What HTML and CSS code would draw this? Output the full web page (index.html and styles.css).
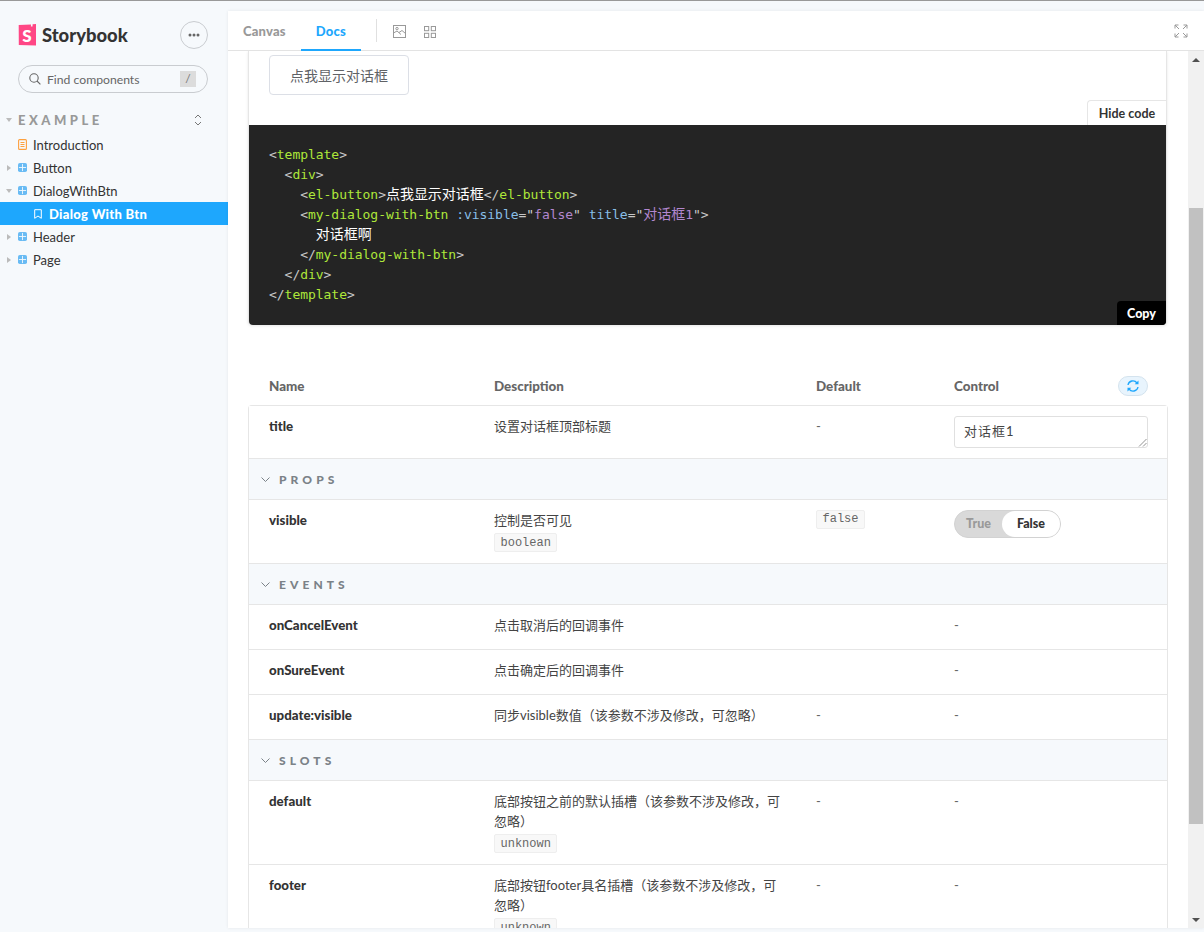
FILE: index.html
```html
<!DOCTYPE html>
<html lang="zh">
<head>
<meta charset="utf-8">
<title>Storybook</title>
<link rel="stylesheet" href="styles.css">
</head>
<body>
<div class="app">
  <aside class="sidebar">
    <div class="brand">
      <svg class="logo" viewBox="0 0 18 22"><path fill="#ff4785" d="M0.7 1 13 .4l-.1 2.200 1.600-.1.1-2.300L18 0v21.600L.8 21z"/><text x="9" y="17.500" text-anchor="middle" class="logo-s">S</text></svg>
      <span class="brand-name">Storybook</span>
      <button class="menu-btn"><svg width="12" height="4" viewBox="0 0 12 4"><circle cx="2" cy="2" r="1.500"/><circle cx="6" cy="2" r="1.500"/><circle cx="10" cy="2" r="1.500"/></svg></button>
    </div>
    <div class="search">
      <svg class="search-ico" width="12" height="12" viewBox="0 0 12 12"><circle cx="5" cy="5" r="4.200"/><path d="M8 8l3.400 3.400"/></svg>
      <span class="search-text">Find components</span>
      <kbd class="search-key">/</kbd>
    </div>
    <div class="tree-head">
      <svg class="caret" width="6" height="4" viewBox="0 0 6 4"><path d="M0 0h6L3 4z"/></svg>
      <span class="tree-title">EXAMPLE</span>
      <svg class="updown" width="8" height="12" viewBox="0 0 8 12"><path d="M1 4l3-3 3 3M1 8l3 3 3-3"/></svg>
    </div>
    <ul class="tree">
      <li class="node"><span class="caret-gap"></span><svg class="ico" width="9" height="11" viewBox="0 0 9 11"><rect x=".6" y=".6" width="7.800" height="9.800" rx="1" class="doc"/><path class="doc" d="M2.500 3.500h4M2.500 5.500h4M2.500 7.500h4"/></svg>Introduction</li>
      <li class="node"><svg class="caret side" width="4" height="6" viewBox="0 0 4 6"><path d="M0 0v6l4-3z"/></svg><svg class="ico" width="9" height="9" viewBox="0 0 10 10"><rect width="10" height="10" rx="2" class="comp"/><path d="M5 1v8M1 5h8" class="comp-line"/></svg>Button</li>
      <li class="node"><svg class="caret" width="6" height="4" viewBox="0 0 6 4"><path d="M0 0h6L3 4z"/></svg><svg class="ico" width="9" height="9" viewBox="0 0 10 10"><rect width="10" height="10" rx="2" class="comp"/><path d="M5 1v8M1 5h8" class="comp-line"/></svg>DialogWithBtn</li>
      <li class="node selected"><svg class="mark" width="8" height="10" viewBox="0 0 8 10"><path d="M.7.7h6.600v8.600L4 7 .7 9.300z"/></svg>Dialog With Btn</li>
      <li class="node"><svg class="caret side" width="4" height="6" viewBox="0 0 4 6"><path d="M0 0v6l4-3z"/></svg><svg class="ico" width="9" height="9" viewBox="0 0 10 10"><rect width="10" height="10" rx="2" class="comp"/><path d="M5 1v8M1 5h8" class="comp-line"/></svg>Header</li>
      <li class="node"><svg class="caret side" width="4" height="6" viewBox="0 0 4 6"><path d="M0 0v6l4-3z"/></svg><svg class="ico" width="9" height="9" viewBox="0 0 10 10"><rect width="10" height="10" rx="2" class="comp"/><path d="M5 1v8M1 5h8" class="comp-line"/></svg>Page</li>
    </ul>
  </aside>
  <main class="panel">
    <header class="toolbar">
      <a class="tab">Canvas</a>
      <a class="tab active">Docs</a>
      <span class="divider"></span>
      <svg class="tool" width="13" height="13" viewBox="0 0 13 13"><rect x=".5" y=".5" width="12" height="12"/><circle cx="4" cy="3.600" r="1.200"/><path d="M.5 8l3.500-2 4 3.500M6 7.500L9 5.500l3.500 3"/></svg>
      <svg class="tool" width="12" height="12" viewBox="0 0 12 12"><rect x=".5" y=".5" width="4.200" height="4.200"/><rect x="7.300" y=".5" width="4.200" height="4.200"/><rect x=".5" y="7.300" width="4.200" height="4.200"/><rect x="7.300" y="7.300" width="4.200" height="4.200"/></svg>
      <svg class="tool expand" width="14" height="14" viewBox="0 0 14 14"><path d="M1 1l4 4M13 1L9 5M1 13l4-4M13 13L9 9M1 4.500V1h3.500M13 4.500V1H9.500M1 9.500V13h3.500M13 9.500V13H9.500"/></svg>
    </header>
    <div class="body">
      <div class="content">
        <section class="story">
          <div class="preview"><button class="demo-btn">点我显示对话框</button></div>
          <div class="hide-row"><span class="hide-code">Hide code</span></div>
          <div class="code">
<pre class="code-pre"><span class="p">&lt;</span><span class="g">template</span><span class="p">&gt;</span>
  <span class="p">&lt;</span><span class="g">div</span><span class="p">&gt;</span>
    <span class="p">&lt;</span><span class="g">el-button</span><span class="p">&gt;</span><span class="w zh">点我显示对话框</span><span class="p">&lt;/</span><span class="g">el-button</span><span class="p">&gt;</span>
    <span class="p">&lt;</span><span class="g">my-dialog-with-btn</span> <span class="b">:visible</span><span class="p">=</span><span class="q">"</span><span class="v">false</span><span class="q">"</span> <span class="b">title</span><span class="p">=</span><span class="q">"</span><span class="v"><span class="zh">对话框</span>1</span><span class="q">"</span><span class="p">&gt;</span>
      <span class="w zh">对话框啊</span>
    <span class="p">&lt;/</span><span class="g">my-dialog-with-btn</span><span class="p">&gt;</span>
  <span class="p">&lt;/</span><span class="g">div</span><span class="p">&gt;</span>
<span class="p">&lt;/</span><span class="g">template</span><span class="p">&gt;</span></pre>
            <span class="copy">Copy</span>
          </div>
        </section>

        <div class="args-head row-grid">
          <span>Name</span><span>Description</span><span>Default</span>
          <span class="control-head">Control<span class="reset"><svg width="14" height="14" viewBox="0 0 14 14"><path d="M2 6a5 5 0 0 1 9-2M12 8a5 5 0 0 1-9 2"/><path class="arrow" d="M12.500 1.500v3.800H8.700zM1.500 12.500V8.700h3.800z"/></svg></span></span>
        </div>
        <div class="args">
          <div class="row row-grid row-title">
            <span class="name">title</span>
            <span class="desc">设置对话框顶部标题</span>
            <span class="dash">-</span>
            <div class="input">对话框1<svg class="grip" width="9" height="9" viewBox="0 0 9 9"><path d="M8.500 1L1 8.500M8.500 5L5 8.500"/></svg></div>
          </div>
          <div class="group"><svg class="chev" width="9" height="5" viewBox="0 0 9 5"><path d="M.5.500l4 4 4-4"/></svg>PROPS</div>
          <div class="row row-grid">
            <span class="name">visible</span>
            <div class="desc">控制是否可见<div class="chip-line"><code class="chip">boolean</code></div></div>
            <div class="default"><code class="chip chip-top">false</code></div>
            <div class="toggle"><span class="opt">True</span><span class="opt on">False</span></div>
          </div>
          <div class="group"><svg class="chev" width="9" height="5" viewBox="0 0 9 5"><path d="M.5.500l4 4 4-4"/></svg>EVENTS</div>
          <div class="row row-grid">
            <span class="name">onCancelEvent</span><span class="desc">点击取消后的回调事件</span><span></span><span class="dash">-</span>
          </div>
          <div class="row row-grid">
            <span class="name">onSureEvent</span><span class="desc">点击确定后的回调事件</span><span></span><span class="dash">-</span>
          </div>
          <div class="row row-grid">
            <span class="name">update:visible</span><span class="desc">同步visible数值（该参数不涉及修改，可忽略）</span><span class="dash">-</span><span class="dash">-</span>
          </div>
          <div class="group"><svg class="chev" width="9" height="5" viewBox="0 0 9 5"><path d="M.5.500l4 4 4-4"/></svg>SLOTS</div>
          <div class="row row-grid">
            <span class="name">default</span>
            <div class="desc">底部按钮之前的默认插槽（该参数不涉及修改，可忽略）<div class="chip-line"><code class="chip">unknown</code></div></div>
            <span class="dash">-</span><span class="dash">-</span>
          </div>
          <div class="row row-grid">
            <span class="name">footer</span>
            <div class="desc">底部按钮footer具名插槽（该参数不涉及修改，可忽略）<div class="chip-line"><code class="chip">unknown</code></div></div>
            <span class="dash">-</span><span class="dash">-</span>
          </div>
        </div>
      </div>
      <div class="scrollbar">
        <span class="arrow-up"></span>
        <div class="track"><div class="thumb"></div></div>
        <span class="arrow-down"></span>
      </div>
    </div>
  </main>
</div>
</body>
</html>
```
FILE: styles.css
```css
* { box-sizing: border-box; }
html, body { margin: 0; height: 932px; overflow: hidden; }
body {
  font-family: Lato, "Noto Sans CJK SC", sans-serif;
  font-size: 13px;
  color: #333;
  background: #f6f9fc;
}
.app {
  display: flex;
  height: 932px;
  border-top: 1px solid #999;
}
.sidebar { width: 228px; flex: none; padding-top: 20px; }
.brand { display: flex; align-items: center; padding: 0 20px 0 18px; height: 28px; }
.logo { width: 18px; height: 22px; flex: none; }
.logo-s { font: 900 17px Lato, sans-serif; fill: #fff; }
.brand-name { font-size: 18.400px; font-weight: 900; color: #333; margin: -1px 0 0 6px; flex: 1; }
.menu-btn {
  width: 28px; height: 28px; border-radius: 50%;
  border: 1px solid #c9ccd0; background: #f6f9fc;
  display: flex; align-items: center; justify-content: center; padding: 0;
}
.menu-btn svg { fill: #666; }
.search {
  margin: 16px 20px 0 18px; height: 28px;
  border: 1px solid #c9ccd0; border-radius: 14px;
  display: flex; align-items: center; padding: 0 11px 0 10px;
}
.search-ico { fill: none; stroke: #666; stroke-width: 1.100; }
.search-text { margin-left: 6px; flex: 1; font-size: 12.200px; color: #666; }
.search-key {
  width: 16px; height: 16px; background: #dcdcdc; color: #777;
  font: 12px/16px Lato, sans-serif; text-align: center;
}
.tree-head { display: flex; align-items: center; height: 14px; margin-top: 20px; padding: 0 26px 0 6px; }
.caret { fill: #bbb; flex: none; }
.tree-title { flex: 1; margin-left: 6px; font-size: 13px; font-weight: 900; letter-spacing: .27em; color: #999; }
.updown { fill: none; stroke: #777; stroke-width: 1; }
.tree { list-style: none; margin: 6px 0 0; padding: 0; }
.node { height: 23px; display: flex; align-items: center; padding-left: 6px; font-size: 13px; color: #333; }
.caret-gap { width: 6px; flex: none; }
.caret.side { margin: 0 1px; }
.ico { margin: 0 6px 0 6px; flex: none; }
.doc { fill: none; stroke: #ff8300; stroke-width: 1.100; opacity: .75; }
.comp { fill: #69bbf4; }
.comp-line { stroke: #f2f9fe; stroke-width: 1; }
.selected { background: #1ea7fd; color: #fff; font-weight: 900; padding-left: 34px; letter-spacing: .3px; }
.mark { fill: none; stroke: #fff; stroke-width: 1; margin-right: 7px; flex: none; }

.panel {
  flex: 1; min-width: 0; margin: 10px 0 4px;
  background: #fff; display: flex; flex-direction: column;
  box-shadow: 0 0 3px rgba(0,0,0,.08);
}
.toolbar {
  height: 40px; flex: none; border-bottom: 1px solid #e3e3e3;
  display: flex; align-items: stretch; padding: 0 16px 0 0;
}
.tab {
  padding: 1px 15px 0; font-size: 13px; font-weight: 900; color: #999; letter-spacing: .2px;
  display: flex; align-items: center; border-bottom: 2px solid transparent; margin-bottom: -1px;
}
.tab.active { color: #1ea7fd; border-bottom-color: #1ea7fd; }
.divider { width: 1px; height: 23px; background: #e0e0e0; align-self: center; margin: 0 16px 0 15px; }
.tool { fill: none; stroke: #999; stroke-width: 1; align-self: center; margin: 2px 18px 0 0; }
.expand { margin: 0 0 0 auto; }

.body { flex: 1; min-height: 0; display: flex; }
.content { flex: 1; min-width: 0; padding: 0 20px; overflow: hidden; }
.story {
  border-left: 1px solid #e6e6e6; border-right: 1px solid #e6e6e6;
  border-radius: 0 0 4px 4px;
  box-shadow: 0 1px 3px rgba(0,0,0,.1);
  margin: 0 1px 0 0;
}
.preview { padding: 4px 20px 0; height: 49px; }
.demo-btn {
  width: 140px; height: 40px; border: 1px solid #dcdfe6; border-radius: 4px;
  background: #fff; color: #606266; font: 14px "Noto Sans CJK SC", sans-serif;
}
.hide-row { display: flex; justify-content: flex-end; height: 25px; }
.hide-code {
  width: 79px; border: 1px solid #e6e6e6; border-width: 1px 0 0 1px;
  border-radius: 4px 0 0 0; text-align: center; font-size: 12.500px; font-weight: 700;
  line-height: 26px; color: #333;
}
.code {
  position: relative; background: #242424; height: 200px;
  padding: 20px; border-radius: 0 0 4px 4px; overflow: hidden;
}
.code-pre {
  margin: 0; font: 13px/20px "DejaVu Sans Mono", "Noto Sans CJK SC", monospace;
  color: #fff; letter-spacing: -.03px;
}
.zh { font-size: 14px; line-height: 1; }
.p { color: #c8c8c8; }
.g { color: #aee83a; }
.w { color: #fff; }
.b { color: #88bfe8; }
.q { color: #cfcfcf; }
.v { color: #b287cf; }
.copy {
  position: absolute; right: 0; bottom: 0; width: 49px; height: 24px;
  background: #000; color: #fff; font-size: 12.500px; font-weight: 900;
  text-align: center; line-height: 26px; border-radius: 4px 0 0 0;
}
.row-grid { display: grid; grid-template-columns: 225px 322px 138px 194px; }
.args-head {
  margin-top: 41px; height: 39px; padding: 10px 20px 0 21px;
  font-size: 13.400px; font-weight: 900; color: #666; line-height: 20px;
}
.control-head { display: flex; justify-content: space-between; align-items: center; height: 20px; }
.reset {
  width: 30px; height: 20px; border-radius: 10px; background: #e8f4fd;
  border: 1px solid #d4e3ee; display: flex; align-items: center; justify-content: center;
}
.reset svg { fill: none; stroke: #1ea7fd; stroke-width: 1.300; }
.reset .arrow { fill: #1ea7fd; stroke: none; }
.args {
  border: 1px solid #e6e6e6; border-bottom: 0; border-radius: 4px 4px 0 0;
}
.row {
  padding: 10px 20px 11px; min-height: 45px; border-bottom: 1px solid #e6e6e6;
  line-height: 20px; background: #fff;
}
.row-title { height: 53px; padding-bottom: 0; }
.name { font-size: 13.300px; font-weight: 900; color: #333; }
.desc { padding-right: 30px; font-size: 13px; color: #444; }
.dash { color: #666; }
.chip-line { height: 22px; padding-top: 3px; }
.chip {
  display: block; width: fit-content; height: 19px; padding: 0 5.500px;
  border: 1px solid #eee; border-radius: 2px; background: #f8f8f8;
  font: 12px/18px "Liberation Mono", monospace; color: #666;
}
.chip-top { line-height: 16px; }
.default { height: 20px; }
.input {
  position: relative; height: 32px; border: 1px solid #e0e0e0; border-radius: 3px;
  padding: 4px 9px; font-size: 13px; letter-spacing: 1px; line-height: 20px; color: #444;
}
.grip { position: absolute; right: 0; bottom: 0; fill: none; stroke: #777; stroke-width: .8; }
.group {
  height: 41px; border-bottom: 1px solid #e6e6e6; background: #f6f9fc;
  display: flex; align-items: center; padding-left: 12px;
  font-size: 12px; font-weight: 900; letter-spacing: .34em; color: #7b8288;
}
.chev { fill: none; stroke: #7b8288; stroke-width: 1; margin-right: 9px; }
.toggle {
  display: flex; width: 107px; height: 28px; border-radius: 14px; background: #d9d9d9;
  border: 1px solid #d2d2d2; padding: 0;
}
.opt { flex: 1; text-align: center; line-height: 26px; font-size: 12.500px; font-weight: 900; color: #999; }
.opt.on { flex: none; width: 58px; background: #fff; border-radius: 13px; color: #333; }
.scrollbar {
  width: 16px; flex: none; background: #f1f1f1; display: flex; flex-direction: column; align-items: stretch;
}
.arrow-up, .arrow-down { height: 17px; flex: none; display: flex; align-items: center; justify-content: center; }
.arrow-up::before { content: ""; border: 4px solid transparent; border-top: 0; border-bottom: 4px solid #505050; }
.arrow-down::before { content: ""; border: 4px solid transparent; border-bottom: 0; border-top: 4px solid #505050; }
.track { flex: 1; padding-top: 140px; }
.thumb { height: 616px; width: 14px; margin-left: 1px; background: #c1c1c1; }
```
